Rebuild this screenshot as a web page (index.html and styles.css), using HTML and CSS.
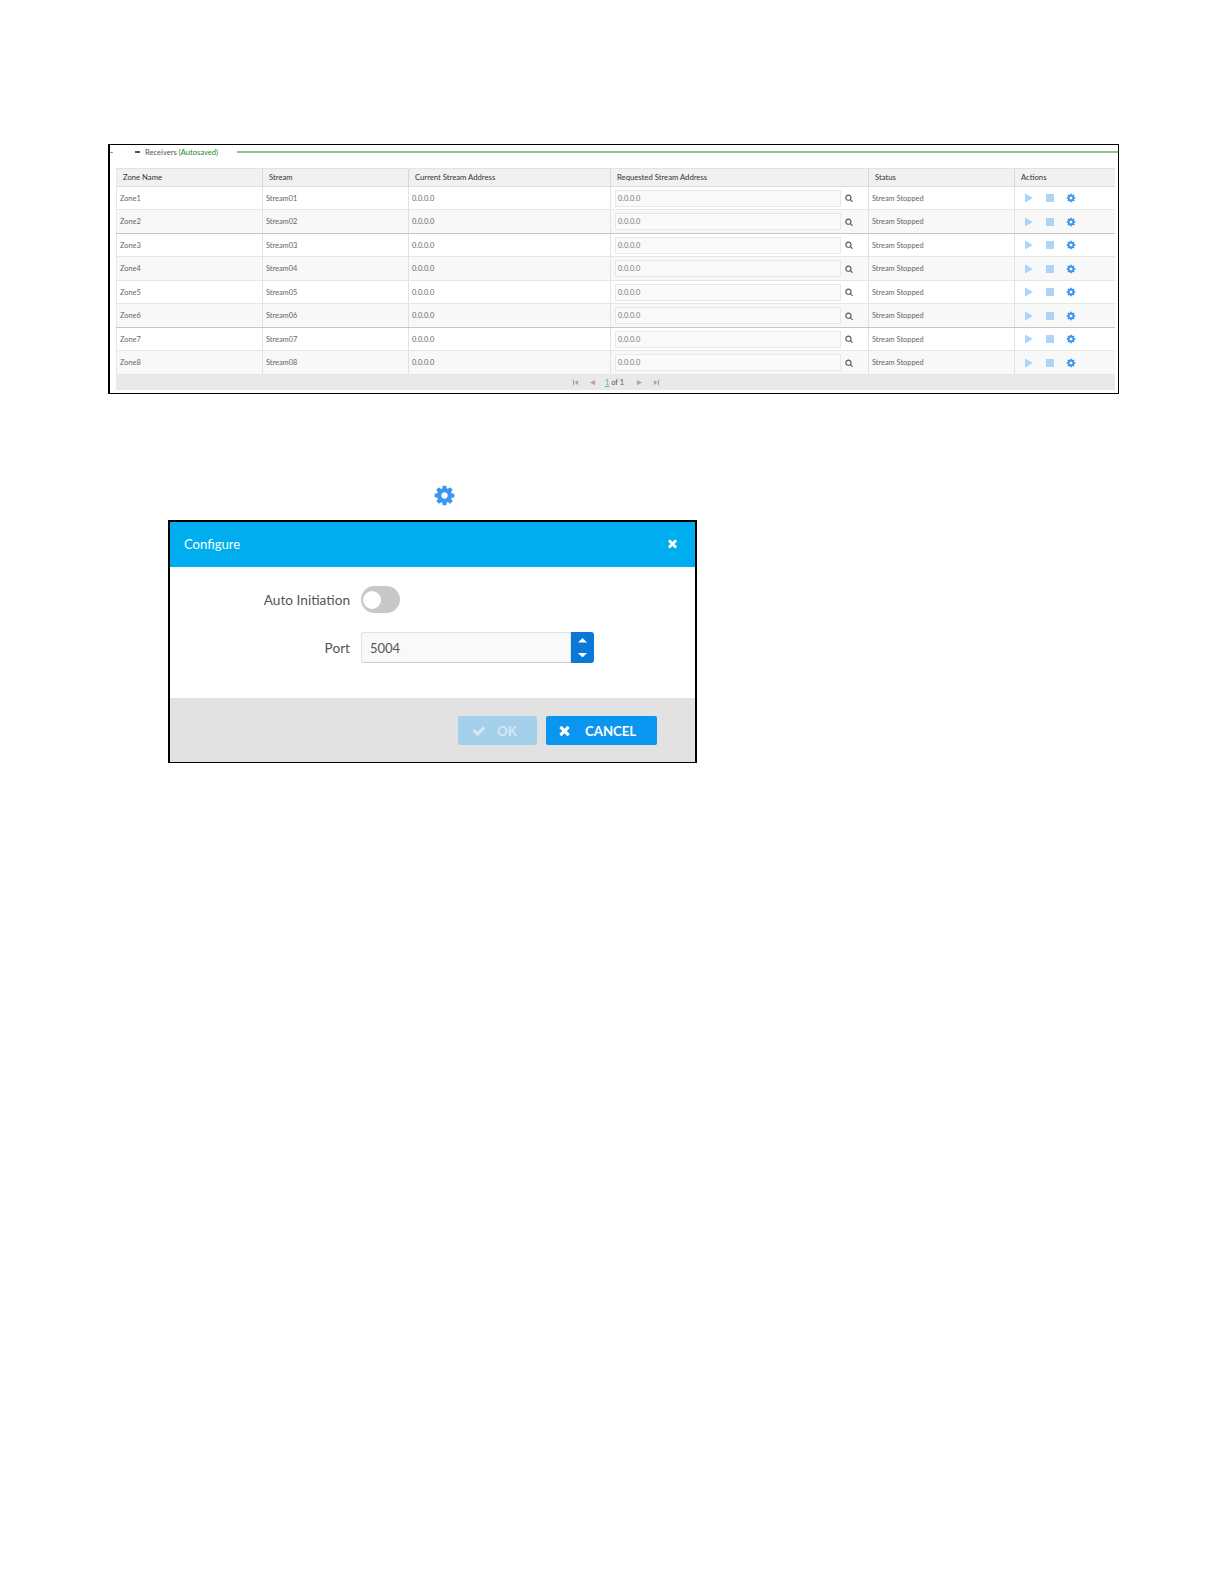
FILE: index.html
```html
<!DOCTYPE html>
<html lang="en">
<head>
<meta charset="utf-8">
<title>Receivers</title>
<link rel="stylesheet" href="styles.css">
</head>
<body>
<svg class="defs" aria-hidden="true">
  <symbol id="cog" viewBox="0 0 1792 1792"><path d="M1152 896q0-106-75-181t-181-75-181 75-75 181 75 181 181 75 181-75 75-181zm512-109v222q0 12-8 23t-20 13l-185 28q-19 54-39 91 35 50 107 138 10 12 10 25t-9 23q-27 37-99 108t-94 71q-12 0-26-9l-138-108q-44 23-91 38-16 136-29 186-7 28-36 28h-222q-14 0-24.5-8.5t-11.5-21.5l-28-184q-49-16-90-37l-141 107q-10 9-25 9-14 0-25-11-126-114-165-168-7-10-7-23 0-12 8-23 15-21 51-66.5t54-70.5q-27-50-41-99l-183-27q-13-2-21-12.5t-8-23.5v-222q0-12 8-23t19-13l186-28q14-46 39-92-40-57-107-138-10-12-10-24 0-10 9-23 26-36 98.5-107.5t94.5-71.5q13 0 26 10l138 107q44-23 91-38 16-136 29-186 7-28 36-28h222q14 0 24.5 8.5t11.5 21.5l28 184q49 16 90 37l142-107q9-9 24-9 13 0 25 10 129 119 165 170 7 8 7 22 0 12-8 23-15 21-51 66.5t-54 70.5q26 50 41 98l183 28q13 2 21 12.5t8 23.5z"/></symbol>
  <symbol id="times" viewBox="0 0 1792 1792"><path d="M1490 1322q0 40-28 68l-136 136q-28 28-68 28t-68-28l-294-294-294 294q-28 28-68 28t-68-28l-136-136q-28-28-28-68t28-68l294-294-294-294q-28-28-28-68t28-68l136-136q28-28 68-28t68 28l294 294 294-294q28-28 68-28t68 28l136 136q28 28 28 68t-28 68l-294 294 294 294q28 28 28 68z"/></symbol>
  <symbol id="check" viewBox="0 0 1792 1792"><path d="M1671 566q0 40-28 68l-724 724-136 136q-28 28-68 28t-68-28l-136-136-362-362q-28-28-28-68t28-68l136-136q28-28 68-28t68 28l294 295 656-657q28-28 68-28t68 28l136 136q28 28 28 68z"/></symbol>
  <symbol id="search" viewBox="0 0 1792 1792"><path d="M1216 832q0-185-131.5-316.5t-316.5-131.5-316.5 131.5-131.5 316.5 131.5 316.5 316.5 131.5 316.5-131.5 131.5-316.5zm512 832q0 52-38 90t-90 38q-54 0-90-38l-343-342q-179 124-399 124-143 0-273.5-55.5t-225-150-150-225-55.5-273.5 55.5-273.5 150-225 225-150 273.5-55.5 273.5 55.5 225 150 150 225 55.5 273.5q0 220-124 399l343 343q37 37 37 90z"/></symbol>
  <symbol id="play" viewBox="0 0 10 10"><path d="M1 0.5 9 5 1 9.5z"/></symbol>
  <symbol id="stop" viewBox="0 0 10 10"><path d="M1 1h8v8h-8z"/></symbol>
</svg>

<section class="panel">
  <div class="legend">
    <span class="tick"></span>
    <span class="minus"></span>
    <span class="legend-text">Receivers <span class="saved">(Autosaved)</span></span>
    <span class="rule"></span>
  </div>
  <div class="grid">
    <div class="row head">
      <div class="cell">Zone Name</div><div class="cell">Stream</div><div class="cell">Current Stream Address</div><div class="cell">Requested Stream Address</div><div class="cell">Status</div><div class="cell">Actions</div>
    </div>

    <div class="row">
      <div class="cell">Zone1</div><div class="cell">Stream01</div><div class="cell">0.0.0.0</div>
      <div class="cell addr"><span class="field">0.0.0.0</span><svg class="ic-search"><use href="#search"/></svg></div>
      <div class="cell">Stream Stopped</div>
      <div class="cell acts"><svg class="ic-a faded"><use href="#play"/></svg><svg class="ic-a faded"><use href="#stop"/></svg><svg class="ic-a cog"><use href="#cog"/></svg></div>
    </div>
    <div class="row alt sep">
      <div class="cell">Zone2</div><div class="cell">Stream02</div><div class="cell">0.0.0.0</div>
      <div class="cell addr"><span class="field">0.0.0.0</span><svg class="ic-search"><use href="#search"/></svg></div>
      <div class="cell">Stream Stopped</div>
      <div class="cell acts"><svg class="ic-a faded"><use href="#play"/></svg><svg class="ic-a faded"><use href="#stop"/></svg><svg class="ic-a cog"><use href="#cog"/></svg></div>
    </div>
    <div class="row">
      <div class="cell">Zone3</div><div class="cell">Stream03</div><div class="cell">0.0.0.0</div>
      <div class="cell addr"><span class="field">0.0.0.0</span><svg class="ic-search"><use href="#search"/></svg></div>
      <div class="cell">Stream Stopped</div>
      <div class="cell acts"><svg class="ic-a faded"><use href="#play"/></svg><svg class="ic-a faded"><use href="#stop"/></svg><svg class="ic-a cog"><use href="#cog"/></svg></div>
    </div>
    <div class="row alt">
      <div class="cell">Zone4</div><div class="cell">Stream04</div><div class="cell">0.0.0.0</div>
      <div class="cell addr"><span class="field">0.0.0.0</span><svg class="ic-search"><use href="#search"/></svg></div>
      <div class="cell">Stream Stopped</div>
      <div class="cell acts"><svg class="ic-a faded"><use href="#play"/></svg><svg class="ic-a faded"><use href="#stop"/></svg><svg class="ic-a cog"><use href="#cog"/></svg></div>
    </div>
    <div class="row">
      <div class="cell">Zone5</div><div class="cell">Stream05</div><div class="cell">0.0.0.0</div>
      <div class="cell addr"><span class="field">0.0.0.0</span><svg class="ic-search"><use href="#search"/></svg></div>
      <div class="cell">Stream Stopped</div>
      <div class="cell acts"><svg class="ic-a faded"><use href="#play"/></svg><svg class="ic-a faded"><use href="#stop"/></svg><svg class="ic-a cog"><use href="#cog"/></svg></div>
    </div>
    <div class="row alt sep">
      <div class="cell">Zone6</div><div class="cell">Stream06</div><div class="cell">0.0.0.0</div>
      <div class="cell addr"><span class="field">0.0.0.0</span><svg class="ic-search"><use href="#search"/></svg></div>
      <div class="cell">Stream Stopped</div>
      <div class="cell acts"><svg class="ic-a faded"><use href="#play"/></svg><svg class="ic-a faded"><use href="#stop"/></svg><svg class="ic-a cog"><use href="#cog"/></svg></div>
    </div>
    <div class="row">
      <div class="cell">Zone7</div><div class="cell">Stream07</div><div class="cell">0.0.0.0</div>
      <div class="cell addr"><span class="field">0.0.0.0</span><svg class="ic-search"><use href="#search"/></svg></div>
      <div class="cell">Stream Stopped</div>
      <div class="cell acts"><svg class="ic-a faded"><use href="#play"/></svg><svg class="ic-a faded"><use href="#stop"/></svg><svg class="ic-a cog"><use href="#cog"/></svg></div>
    </div>
    <div class="row alt">
      <div class="cell">Zone8</div><div class="cell">Stream08</div><div class="cell">0.0.0.0</div>
      <div class="cell addr"><span class="field">0.0.0.0</span><svg class="ic-search"><use href="#search"/></svg></div>
      <div class="cell">Stream Stopped</div>
      <div class="cell acts"><svg class="ic-a faded"><use href="#play"/></svg><svg class="ic-a faded"><use href="#stop"/></svg><svg class="ic-a cog"><use href="#cog"/></svg></div>
    </div>

    <div class="pager">
      <svg class="pg" viewBox="0 0 8 8"><path d="M1 1h1.500v6H1zM7 1v6L3 4z"/></svg>
      <svg class="pg" viewBox="0 0 8 8"><path d="M7 1v6L1 4z"/></svg>
      <span class="pg-text"><span class="pg-num">1</span> of 1</span>
      <svg class="pg" viewBox="0 0 8 8"><path d="M1 1v6l6-3z"/></svg>
      <svg class="pg" viewBox="0 0 8 8"><path d="M1 1v6l4-3zM5.500 1H7v6H5.500z"/></svg>
    </div>
  </div>
</section>

<svg class="big-cog"><use href="#cog"/></svg>

<section class="dialog">
  <header class="dlg-head">
    <span class="dlg-title">Configure</span>
    <svg class="dlg-close"><use href="#times"/></svg>
  </header>
  <div class="dlg-body">
    <div class="form-row toggle-row">
      <span class="form-label">Auto Initiation</span>
      <span class="toggle"><span class="knob"></span></span>
    </div>
    <div class="form-row port-row">
      <span class="form-label">Port</span>
      <span class="spin-field">
        <span class="spin-value">5004</span>
        <span class="spin-btns">
          <svg class="arrow" viewBox="0 0 10 5"><path d="M5 0 10 5H0z"/></svg>
          <svg class="arrow" viewBox="0 0 10 5"><path d="M5 5 0 0h10z"/></svg>
        </span>
      </span>
    </div>
  </div>
  <footer class="dlg-foot">
    <span class="btn btn-ok"><svg class="btn-ic"><use href="#check"/></svg>OK</span>
    <span class="btn btn-cancel"><svg class="btn-ic-x"><use href="#times"/></svg>CANCEL</span>
  </footer>
</section>
</body>
</html>
```

FILE: styles.css
```css
* { box-sizing: border-box; }
html, body { margin: 0; padding: 0; background: #fff; }
body {
  height: 1584px;
  overflow: hidden;
  padding-top: 144px;
  font-family: Lato, "Open Sans", sans-serif;
  color: #555;
}
.defs { display: none; }

/* Receivers panel */
.panel {
  width: 1011px;
  height: 250px;
  margin-left: 108px;
  border: 1px solid #000;
  border-left-width: 2px;
  background: #fff;
}
.legend {
  display: flex;
  align-items: center;
  height: 14px;
  font-size: 7.6px;
  color: #555;
}
.tick { width: 3px; height: 1px; background: #999; margin-right: 22px; }
.minus { width: 5px; height: 1.5px; background: #555; margin-right: 5px; }
.legend-text { width: 92px; white-space: nowrap; }
.saved { color: #1a8a1a; }
.rule { flex: 1; height: 1.5px; background: #8cc68c; }

.grid { margin: 9px 3px 0 6px; }
.row {
  display: grid;
  grid-template-columns: 147px 146px 202px 258px 146px 100px;
  height: 23.5px;
  border-bottom: 1px solid #e6e6e6;
  background: #fff;
  font-size: 7.4px;
  color: #666;
}
.row.alt { background: #f8f8f8; }
.row.sep { border-bottom-color: #c6c6c6; }
.row.head {
  height: 18.5px;
  background: #f1f1f1;
  color: #333;
  font-size: 7.7px;
  border-top: 1px solid #e2e2e2;
  border-bottom: 1px solid #dcdcdc;
}
.cell {
  display: flex;
  align-items: center;
  padding: 1px 0 0 3px;
  border-right: 1px solid #e2e2e2;
  white-space: nowrap;
  min-width: 0;
}
.head .cell { padding: 0 0 0 6px; border-right-color: #d8d8d8; }
.cell:first-child { border-left: 1px solid #e8e8e8; }
.cell:last-child { border-right: 0; }
.addr { gap: 4px; padding-left: 4px; }
.field {
  display: flex;
  align-items: center;
  width: 226px;
  height: 17px;
  padding-left: 2px;
  background: #fafafa;
  border: 1px solid #e8e8e8;
  color: #777;
}
.ic-search { width: 8px; height: 8px; fill: #555; }
.acts { gap: 11px; padding-left: 9px; }
.ic-a { width: 10px; height: 10px; flex: none; }
.faded { fill: #acd4f8; }
.cog { fill: #3b97ee; }

.pager {
  display: flex;
  align-items: center;
  height: 15px;
  padding-left: 456px;
  background: #e9e9e9;
  font-size: 7.4px;
  color: #555;
}
.pg { width: 7px; height: 7px; fill: #a8a8a8; margin-right: 9.5px; }
.pg-text { width: 20px; margin-right: 11px; white-space: nowrap; }
.pg-num { color: #4ab0e0; text-decoration: underline; }

/* Standalone cog */
.big-cog {
  display: block;
  width: 23px;
  height: 23px;
  margin: 90px 0 0 432.5px;
  fill: #3b97ee;
}

/* Configure dialog */
.dialog {
  width: 529px;
  height: 243px;
  margin: 13px 0 0 168px;
  border: 2px solid #000;
  border-bottom-width: 1px;
  display: flex;
  flex-direction: column;
  background: #fff;
}
.dlg-head {
  display: flex;
  align-items: center;
  justify-content: space-between;
  height: 45px;
  padding: 0 16px 2px 14px;
  background: #00aeef;
  color: #fff;
  font-size: 13.1px;
}
.dlg-close { width: 13px; height: 13px; fill: #fff; }
.dlg-body {
  flex: 1;
  padding-top: 19px;
  background: #fff;
}
.form-row {
  display: flex;
  align-items: center;
}
.toggle-row { height: 27px; margin-bottom: 19px; }
.port-row { height: 31px; }
.form-label {
  width: 180px;
  text-align: right;
  margin-right: 11px;
  font-size: 13.65px;
  color: #555;
}
.toggle {
  display: flex;
  align-items: center;
  width: 39px;
  height: 27px;
  padding-left: 2px;
  border-radius: 14px;
  background: #c8c8c8;
}
.knob { width: 18px; height: 18px; border-radius: 50%; background: #fff; }
.spin-field { display: flex; height: 31px; }
.spin-value {
  display: flex;
  align-items: center;
  width: 210px;
  padding-left: 8px;
  background: #f9f9f9;
  border: 1px solid #e2e2e2;
  border-bottom-color: #c8c8c8;
  border-radius: 3px 0 0 3px;
  font-size: 13px;
  color: #555;
}
.spin-btns {
  display: flex;
  flex-direction: column;
  align-items: center;
  justify-content: center;
  gap: 10px;
  width: 23px;
  background: #0a78d6;
  border-radius: 0 3px 3px 0;
}
.arrow { width: 9px; height: 4.5px; fill: #fff; }
.dlg-foot {
  display: flex;
  justify-content: flex-end;
  gap: 9px;
  height: 64px;
  padding: 18px 38px 0 0;
  background: #e2e2e2;
}
.btn {
  display: flex;
  align-items: center;
  height: 29px;
  border-radius: 2px;
  color: #fff;
  font-size: 13.2px;
  font-weight: 700;
}
.btn-ic { width: 14px; height: 14px; fill: currentColor; flex: none; }
.btn-ic-x { width: 15px; height: 15px; fill: currentColor; flex: none; }
.btn-ok { width: 79px; padding-left: 14px; gap: 11px; background: #a5d0ec; color: #d6e8f4; }
.btn-cancel { width: 111px; padding-left: 11px; gap: 13px; background: #0a96f0; }
```
